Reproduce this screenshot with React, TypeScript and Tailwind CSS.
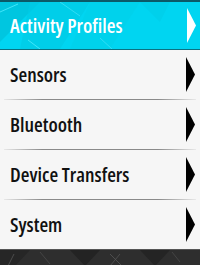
const items = ["Sensors", "Bluetooth", "Device Transfers", "System"];

function Arrow({ color }: { color: string }) {
  return (
    <svg width="9" height="35" viewBox="0 0 9 35" className="shrink-0">
      <polygon points="0,0 9,17.5 0,35" fill={color} />
    </svg>
  );
}

function Separator() {
  return (
    <div className="h-px mx-[4px] bg-[linear-gradient(to_right,#e8e8e8,#8a8a8a_20%,#8a8a8a_80%,#e8e8e8)]" />
  );
}

export default function App() {
  const font = { fontFamily: "'Open Sans', sans-serif", fontStretch: "75%" };
  return (
    <div className="w-[200px] h-[265px] flex flex-col bg-[#f6f6f6] overflow-hidden" style={font}>
      <div className="h-[2px] bg-[#0b5a68]" />
      <div className="relative h-[47px] bg-[#00d5f1] flex items-center justify-between pl-[10px] pr-[4px] overflow-hidden">
        <svg className="absolute inset-0" width="200" height="47" viewBox="0 0 200 47">
          <polygon points="0,0 40,0 0,40" fill="#00c2dc" opacity="0.8" />
          <polygon points="30,0 90,0 60,47 20,47" fill="#00cbe6" opacity="0.7" />
          <polygon points="90,0 140,0 110,47 70,47" fill="#00d0ea" opacity="0.6" />
          <polygon points="140,0 170,0 160,20" fill="#00cde8" opacity="0.6" />
          <line x1="0" y1="10" x2="18" y2="2" stroke="#40e4f8" strokeWidth="1" />
          <line x1="28" y1="38" x2="40" y2="47" stroke="#40e4f8" strokeWidth="1" />
          <line x1="60" y1="0" x2="80" y2="14" stroke="#30dcf4" strokeWidth="1" />
          <line x1="100" y1="36" x2="112" y2="47" stroke="#30dcf4" strokeWidth="1" />
        </svg>
        <span className="relative text-white text-[20px] font-semibold leading-none">Activity Profiles</span>
        <span className="relative flex"><Arrow color="#ffffff" /></span>
      </div>
      <div className="h-px bg-[#0a7282]" />
      {items.map((t, i) => (
        <div key={t} className="flex flex-col">
          <div className="h-[49px] flex items-center justify-between pl-[10px] pr-[5px]">
            <span className="text-[#111111] text-[20px] font-semibold leading-none">{t}</span>
            <Arrow color="#000000" />
          </div>
          {i < items.length - 1 && <Separator />}
        </div>
      ))}
      <div className="relative flex-1 bg-[#2e2e2e] border-t border-[#555555] overflow-hidden">
        <svg className="absolute inset-0" width="200" height="16" viewBox="0 0 200 16">
          <polygon points="0,0 30,0 15,16 0,16" fill="#262626" />
          <polygon points="70,0 100,0 85,16" fill="#232323" />
          <polygon points="140,0 170,0 155,16" fill="#242424" />
          <line x1="8" y1="16" x2="14" y2="4" stroke="#555" strokeWidth="0.8" />
          <line x1="40" y1="2" x2="50" y2="14" stroke="#4a4a4a" strokeWidth="0.8" />
          <line x1="110" y1="4" x2="122" y2="16" stroke="#555" strokeWidth="0.8" />
          <line x1="110" y1="16" x2="120" y2="4" stroke="#555" strokeWidth="0.8" />
          <line x1="172" y1="2" x2="180" y2="12" stroke="#4a4a4a" strokeWidth="0.8" />
        </svg>
      </div>
    </div>
  );
}
